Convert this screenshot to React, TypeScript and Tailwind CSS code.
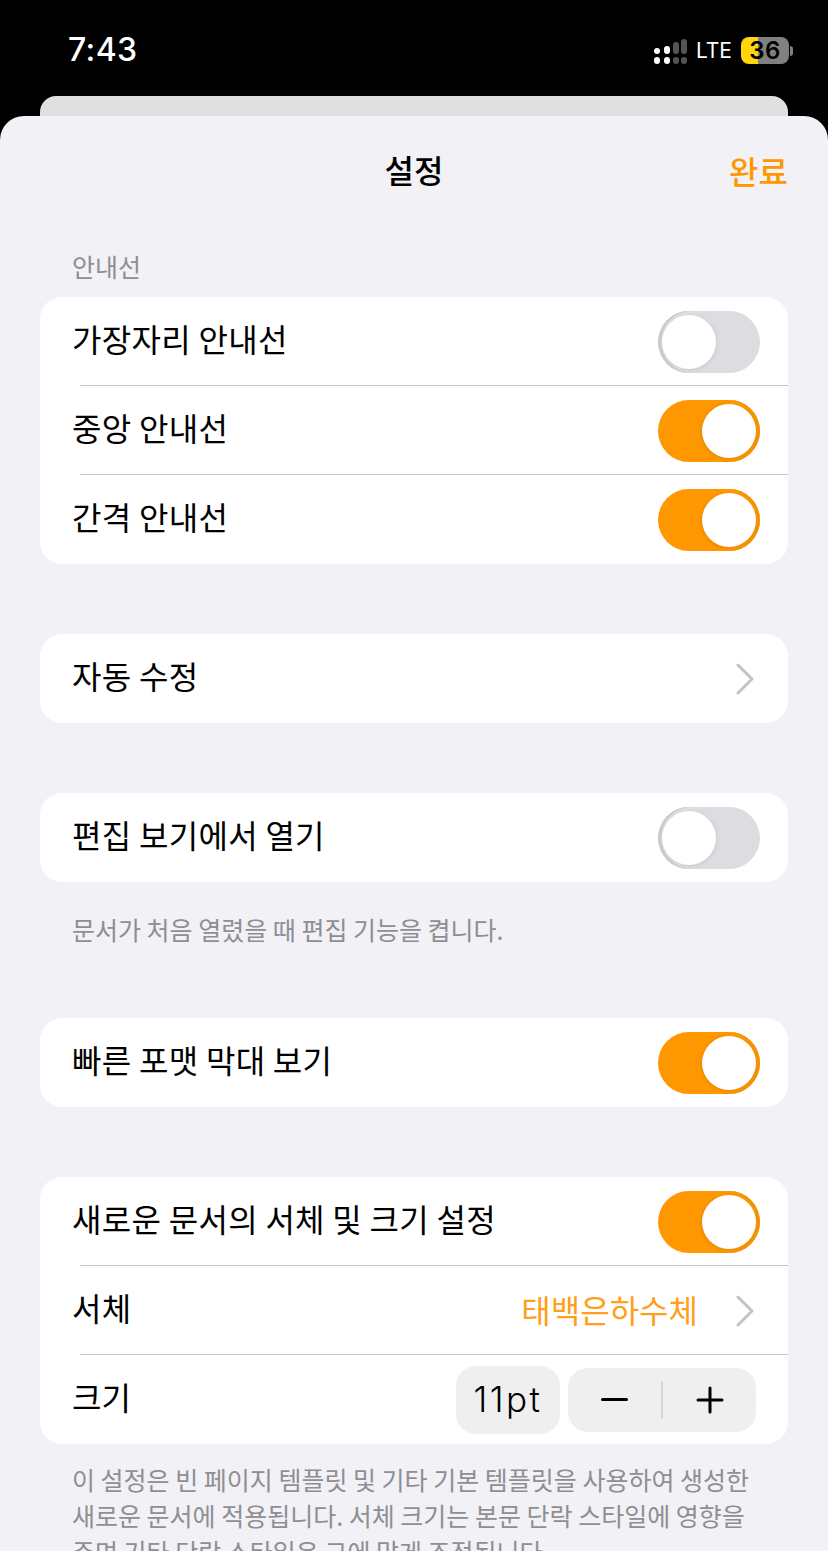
const Toggle = ({ on }: { on?: boolean }) => {
	if (on) {
		return (
			<div className="flex h-[62px] w-[102px] items-center justify-end rounded-full bg-[#ff9800] pr-1 shadow-[inset_-3px_0_0_#f0940c]">
				<div className="h-[54px] w-[54px] rounded-full bg-white shadow-[-1px_1px_4px_rgba(0,0,0,0.1)]" />
			</div>
		);
	}
	return (
		<div className="flex h-[62px] w-[102px] items-center rounded-full bg-[#dcdce1] pl-1 shadow-[inset_3px_0_0_#cbcbcf]">
			<div className="h-[54px] w-[54px] rounded-full bg-white shadow-[1px_1px_4px_rgba(0,0,0,0.08)]" />
		</div>
	);
};

const Chevron = () => (
	<svg width="20" height="32" viewBox="0 0 20 32" fill="none" className="mr-[5px] block">
		<path d="M3 2l14 14L3 30" stroke="#c4c4c7" strokeWidth="3" strokeLinecap="round" strokeLinejoin="round" />
	</svg>
);

const Row = ({
	label,
	children,
	divider,
}: {
	label: string;
	children?: React.ReactNode;
	divider?: boolean;
}) => (
	<div className="relative flex h-[89px] items-center justify-between pl-8 pr-7">
		<span className="-mt-[7px] text-[32px] leading-none tracking-[0.3px] text-black">{label}</span>
		{children}
		{divider && <div className="absolute bottom-0 left-10 right-0 h-px bg-[#c6c6c8]" />}
	</div>
);

const Card = ({ children, className }: { children: React.ReactNode; className?: string }) => (
	<div className={`overflow-hidden rounded-[22px] bg-white ${className ?? ""}`}>{children}</div>
);

export default function App() {
	return (
		<div className="h-[1551px] w-[828px] overflow-hidden bg-black font-['Noto_Sans_CJK_KR','Noto_Sans',sans-serif]">
			<header className="flex h-[96px] items-start justify-between pl-[68px] pr-[35px] pt-[30px]">
				<span className="font-['Inter',sans-serif] text-[32px] font-medium leading-10 tracking-[0.4px] text-white">
					7:43
				</span>
				<div className="mt-[7px] flex items-center">
					<svg width="34" height="26" viewBox="0 0 34 26" className="block">
						<rect x="1" y="10" width="6" height="6" rx="3" fill="#fff" />
						<rect x="1" y="19" width="6" height="7" rx="3" fill="#fff" />
						<rect x="11" y="8" width="6" height="8" rx="3" fill="#fff" />
						<rect x="11" y="19" width="6" height="7" rx="3" fill="#fff" />
						<rect x="20" y="4" width="6" height="12" rx="3" fill="#555" />
						<rect x="20" y="19" width="6" height="7" rx="3" fill="#555" />
						<rect x="28" y="1" width="6" height="15" rx="3" fill="#555" />
						<rect x="28" y="19" width="6" height="7" rx="3" fill="#555" />
					</svg>
					<span className="ml-[9px] font-['Inter',sans-serif] text-[21px] font-normal leading-none text-white">
						LTE
					</span>
					<div className="relative ml-[9px] flex h-[27px] w-[48px] overflow-hidden rounded-[8px]">
						<div className="h-full w-[17px] bg-[#ffd60a]" />
						<div className="h-full flex-1 bg-[#808080]" />
						<span className="absolute inset-0 flex items-center justify-center font-['Inter',sans-serif] text-[24px] font-semibold leading-none tracking-[0.5px] text-black">
							36
						</span>
					</div>
					<div className="ml-[1px] h-[10px] w-[3px] rounded-r-full bg-[#808080]" />
				</div>
			</header>

			<div className="mx-10 h-5 rounded-t-[16px] bg-[#e0e0e0]" />

			<main className="h-[1435px] rounded-t-[24px] bg-[#f1f1f6] px-10">
				<div className="relative flex h-[111px] items-center justify-center">
					<h1 className="-mt-[6px] text-[32px] font-medium leading-none text-black">설정</h1>
					<span className="absolute right-0 -mt-[4px] text-[32px] font-medium leading-none text-[#ff9800]">완료</span>
				</div>

				<p className="mb-[15px] ml-8 mt-[24px] text-[25px] leading-[31px] text-[#8e8e93]">안내선</p>

				<Card>
					<Row label="가장자리 안내선" divider>
						<Toggle />
					</Row>
					<Row label="중앙 안내선" divider>
						<Toggle on />
					</Row>
					<Row label="간격 안내선">
						<Toggle on />
					</Row>
				</Card>

				<Card className="mt-[70px]">
					<Row label="자동 수정">
						<Chevron />
					</Row>
				</Card>

				<Card className="mt-[70px]">
					<Row label="편집 보기에서 열기">
						<Toggle />
					</Row>
				</Card>

				<p className="ml-8 mt-[31px] text-[25px] leading-[33px] text-[#8e8e93]">
					문서가 처음 열렸을 때 편집 기능을 켭니다.
				</p>

				<Card className="mt-[72px]">
					<Row label="빠른 포맷 막대 보기">
						<Toggle on />
					</Row>
				</Card>

				<Card className="mt-[70px]">
					<Row label="새로운 문서의 서체 및 크기 설정" divider>
						<Toggle on />
					</Row>
					<Row label="서체" divider>
						<div className="flex items-center gap-[37px]">
							<span className="-mt-1 text-[32px] leading-none text-[#ff9f1a]">태백은하수체</span>
							<Chevron />
						</div>
					</Row>
					<div className="flex h-[89px] items-center justify-between pl-8 pr-8">
						<span className="-mt-[7px] text-[32px] leading-none text-black">크기</span>
						<div className="flex items-center gap-2">
							<div className="flex h-[68px] w-[104px] items-center justify-center rounded-[20px] bg-[#efefef] font-['Inter',sans-serif] text-[35px] font-light leading-none tracking-[2.5px] text-black">
								11pt
							</div>
							<div className="flex h-[64px] w-[188px] items-center rounded-[20px] bg-[#efefef]">
								<div className="flex w-[93px] justify-center">
									<div className="h-[3px] w-[27px] rounded-full bg-black" />
								</div>
								<div className="h-9 w-0.5 bg-[#d4d4d6]" />
								<div className="flex flex-1 justify-center">
									<svg width="28" height="28" viewBox="0 0 28 28" className="block">
										<path d="M14 2v24M2 14h24" stroke="#000" strokeWidth="3" strokeLinecap="round" />
									</svg>
								</div>
							</div>
						</div>
					</div>
				</Card>

				<p className="ml-8 mr-4 mt-[17px] text-[25px] leading-[36px] text-[#8e8e93]">
					이 설정은 빈 페이지 템플릿 및 기타 기본 템플릿을 사용하여 생성한
					<br />
					새로운 문서에 적용됩니다. 서체 크기는 본문 단락 스타일에 영향을
					<br />
					주며 기타 단락 스타일은 그에 맞게 조정됩니다.
				</p>
			</main>
		</div>
	);
}
